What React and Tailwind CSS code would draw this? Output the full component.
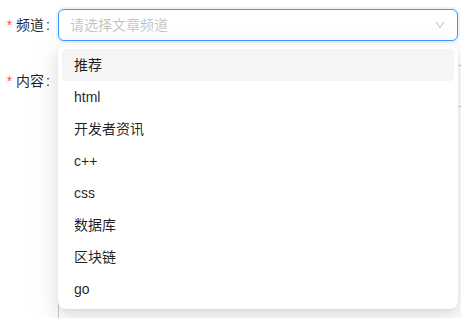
export default function App() {
  const items = ["推荐", "html", "开发者资讯", "c++", "css", "数据库", "区块链", "go"];
  const font = { fontFamily: '"Liberation Sans", "Noto Sans CJK SC", sans-serif' };
  return (
    <div className="w-[461px] h-[318px] overflow-hidden bg-white pt-[9px] text-[14px] text-[rgba(0,0,0,0.88)]" style={font}>
      {/* Row 1 */}
      <div className="flex items-start">
        <div className="w-[58px] h-[32px] flex items-center justify-end pr-[8px] shrink-0">
          <span className="text-[#ff4d4f] mr-[4px] text-[14px] leading-none" style={{ fontFamily: "SimSun, sans-serif" }}>*</span>
          <span>频道</span>
          <span className="ml-[2px]">:</span>
        </div>
        <div className="relative w-[400px] shrink-0">
          <div className="h-[32px] rounded-[6px] border border-[#4096ff] shadow-[0_0_0_2px_rgba(5,145,255,0.1)] flex items-center px-[11px] bg-white">
            <span className="flex-1 text-[rgba(0,0,0,0.25)]">请选择文章频道</span>
            <svg width="12" height="12" viewBox="0 0 1024 1024" className="text-[rgba(0,0,0,0.25)]" fill="currentColor">
              <path d="M884 256h-75c-5.1 0-9.9 2.5-12.9 6.6L512 654.2 227.9 262.6c-3-4.1-7.8-6.6-12.9-6.6h-75c-6.5 0-10.3 7.4-6.5 12.7l352.6 486.1c12.8 17.6 39 17.6 51.7 0l352.6-486.1c3.9-5.3.1-12.7-6.4-12.7z" />
            </svg>
          </div>
          {/* Dropdown */}
          <div className="absolute left-0 top-[36px] w-[400px] z-10 bg-white rounded-[8px] p-[4px] shadow-[0_6px_16px_0_rgba(0,0,0,0.08),0_3px_6px_-4px_rgba(0,0,0,0.12),0_9px_28px_8px_rgba(0,0,0,0.05)]">
            {items.map((it, i) => (
              <div
                key={it}
                className={`h-[32px] flex items-center px-[12px] rounded-[4px] ${i === 0 ? "bg-[#f5f5f5]" : ""}`}
              >
                {it}
              </div>
            ))}
          </div>
        </div>
      </div>
      {/* Row 2 */}
      <div className="flex items-start mt-[24px]">
        <div className="w-[58px] h-[32px] flex items-center justify-end pr-[8px] shrink-0">
          <span className="text-[#ff4d4f] mr-[4px] text-[14px] leading-none" style={{ fontFamily: "SimSun, sans-serif" }}>*</span>
          <span>内容</span>
          <span className="ml-[2px]">:</span>
        </div>
        <div className="w-[600px] shrink-0">
          <div className="h-[42px] border border-[#ccc]"></div>
          <div className="h-[300px] border border-t-0 border-[#ccc]"></div>
        </div>
      </div>
    </div>
  );
}
